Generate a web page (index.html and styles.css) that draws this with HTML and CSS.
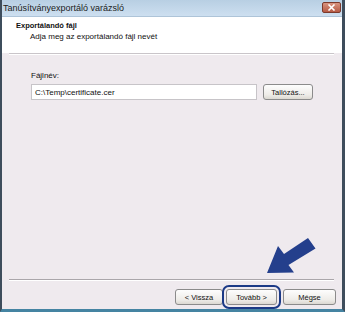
FILE: index.html
```html
<!DOCTYPE html>
<html lang="hu">
<head>
    <meta charset="UTF-8">
    <title>Tanúsítványexportáló varázsló</title>
    <link rel="stylesheet" href="styles.css">
</head>
<body>

    <div class="window">
        <div class="title_bar">
            <span class="title_text">Tanúsítványexportáló varázsló</span>
            <div class="close_button">
                <svg width="9" height="7" viewBox="0 0 9 7">
                    <path d="M1.5 0.5 L7.5 6.5 M7.5 0.5 L1.5 6.5" stroke="#fff" stroke-width="1.6"/>
                </svg>
            </div>
        </div>

        <div class="wizard_header">
            <div class="header_title">Exportálandó fájl</div>
            <div class="header_sub">Adja meg az exportálandó fájl nevét</div>
        </div>
        <div class="header_line"></div>

        <div class="wizard_body">
            <label for="fileName">Fájlnév:</label>
            <div class="file_row">
                <input type="text" id="fileName" value="C:\Temp\certificate.cer">
                <button class="btn browse_button">Tallózás...</button>
            </div>
        </div>

        <div class="footer_line"></div>
        <div class="wizard_footer">
            <button class="btn back_button">&lt; Vissza</button>
            <button class="btn next_button">Tovább &gt;</button>
            <button class="btn cancel_button">Mégse</button>
        </div>

        <!-- pointer arrow drawn over the dialog -->
        <svg class="pointer_arrow" width="345" height="312" viewBox="0 0 345 312">
            <polygon points="267,273 278,246 284,254 308,238 315.5,248.5 288.5,265 294,272.5" fill="#243f8c"/>
        </svg>
    </div>

</body>
</html>
```

FILE: styles.css
```css
body {
    margin: 0;
    padding: 0;
    font-family: 'Liberation Sans', Arial, sans-serif;
    font-size: 8px;
    color: #111;
}

.window {
    position: relative;
    width: 345px;
    height: 312px;
    box-sizing: border-box;
    display: flex;
    flex-direction: column;
    background-color: #efeaee;
    border-left: 2px solid #3e4d5c;
    border-right: 3px solid #3e4d5c;
    border-bottom: 3px solid #4584a2;
    overflow: hidden;
}

.title_bar {
    height: 17px;
    flex-shrink: 0;
    display: flex;
    align-items: center;
    justify-content: space-between;
    padding: 0 1px 0 1px;
    background: linear-gradient(#b8cfe3, #cddff0);
    border-bottom: 1px solid #aec4d8;
    box-sizing: border-box;
}

.title_text {
    font-size: 9px;
    color: #1c1c1c;
}

.close_button {
    width: 19px;
    height: 11px;
    margin-top: -2px;
    display: flex;
    align-items: center;
    justify-content: center;
    background: linear-gradient(#d99480, #b65a44);
    border: 1px solid #7c3a2c;
    border-radius: 2px;
    box-sizing: border-box;
}

.wizard_header {
    height: 36px;
    flex-shrink: 0;
    box-sizing: border-box;
    background-color: #fff;
    padding: 4px 0 0 14px;
    line-height: 10px;
}

.header_title {
    font-weight: bold;
    font-size: 7.5px;
}

.header_sub {
    margin-top: 1px;
    padding-left: 14px;
}

.header_line {
    height: 1px;
    flex-shrink: 0;
    background-color: #c9c5c9;
    border-bottom: 1px solid #fff;
    margin: 0 8px 0 7px;
}

.wizard_body {
    flex: 1;
    padding: 16px 0 0 29px;
    line-height: 10px;
}

label {
    display: block;
    margin-bottom: 3px;
}

.file_row {
    display: flex;
    gap: 6px;
}

input {
    width: 226px;
    height: 16px;
    box-sizing: border-box;
    margin: 0;
    padding: 0 3px;
    border: 1px solid #c7c4c8;
    font-family: 'Liberation Sans', Arial, sans-serif;
    font-size: 8px;
    color: #111;
    outline: none;
}

.btn {
    height: 16px;
    box-sizing: border-box;
    margin: 0;
    padding: 0;
    font-family: 'Liberation Sans', Arial, sans-serif;
    font-size: 7.5px;
    color: #111;
    background: linear-gradient(#fdfdfd, #eeece8 70%, #dcd9d2);
    border: 1px solid #8b8b8b;
    border-radius: 3px;
}

.browse_button {
    width: 50px;
}

.footer_line {
    height: 1px;
    flex-shrink: 0;
    background-color: #aaa6aa;
    border-bottom: 1px solid #fff;
    margin: 0 8px 0 7px;
}

.wizard_footer {
    height: 28px;
    flex-shrink: 0;
    box-sizing: border-box;
    display: flex;
    justify-content: flex-end;
    padding: 8px 6px 0 0;
}

.back_button {
    width: 48px;
}

.next_button {
    width: 51px;
    margin-left: 3px;
    outline: 2px solid #1c3a86;
    outline-offset: 2px;
}

.cancel_button {
    width: 53px;
    margin-left: 6px;
}

.pointer_arrow {
    position: absolute;
    left: -2px;
    top: 0;
}
```
